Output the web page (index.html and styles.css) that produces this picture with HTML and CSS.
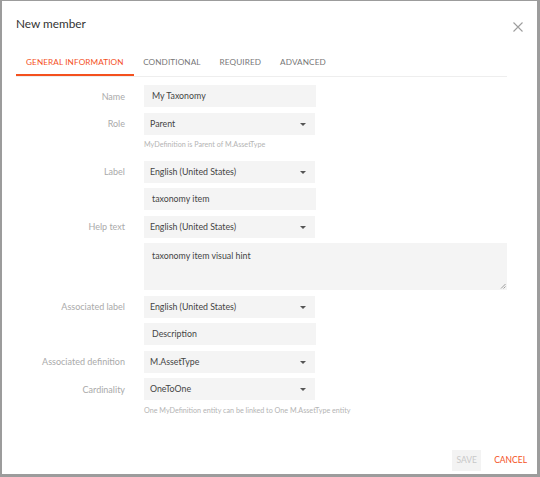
FILE: index.html
```html
<!DOCTYPE html>
<html>
<head>
<meta charset="utf-8">
<link rel="stylesheet" href="styles.css">
</head>
<body>
<div class="dialog">
  <div class="header">
    <div class="title">New member</div>
    <svg class="close" width="10" height="10" viewBox="0 0 10 10"><path d="M0.5 0.5L9.5 9.5M9.5 0.5L0.5 9.5" stroke="#9e9e9e" stroke-width="1.1" fill="none"/></svg>
  </div>
  <div class="tabs">
    <div class="tab active">GENERAL INFORMATION</div>
    <div class="tab">CONDITIONAL</div>
    <div class="tab">REQUIRED</div>
    <div class="tab">ADVANCED</div>
  </div>
  <div class="form">
    <div class="label">Name</div>
    <div class="input">My Taxonomy</div>

    <div class="label">Role</div>
    <div class="select">Parent<span class="caret"></span></div>
    <div class="hint">MyDefinition is Parent of M.AssetType</div>

    <div class="label">Label</div>
    <div class="select">English (United States)<span class="caret"></span></div>
    <div class="input">taxonomy item</div>

    <div class="label">Help text</div>
    <div class="select">English (United States)<span class="caret"></span></div>
    <div class="textarea">taxonomy item visual hint
      <svg class="grip" width="6" height="6" viewBox="0 0 6 6"><path d="M5.5 1L1 5.5M5.5 3.5L3.5 5.5" stroke="#888" stroke-width="0.8" fill="none"/></svg>
    </div>

    <div class="label">Associated label</div>
    <div class="select">English (United States)<span class="caret"></span></div>
    <div class="input">Description</div>

    <div class="label">Associated definition</div>
    <div class="select">M.AssetType<span class="caret"></span></div>

    <div class="label">Cardinality</div>
    <div class="select">OneToOne<span class="caret"></span></div>
    <div class="hint">One MyDefinition entity can be linked to One M.AssetType entity</div>
  </div>
  <div class="footer">
    <div class="btn save">SAVE</div>
    <div class="btn cancel">CANCEL</div>
  </div>
</div>
</body>
</html>
```
FILE: styles.css
```css
* { box-sizing: border-box; }
html, body { margin: 0; padding: 0; background: #fff; }
body { font-family: Lato, "Open Sans", sans-serif; color: #444; }

.dialog {
  width: 540px;
  height: 477px;
  border-style: solid;
  border-color: #9c9c9c;
  border-width: 1px 3px 3px 2px;
  display: flex;
  flex-direction: column;
  background: #fff;
}

.header {
  display: flex;
  justify-content: space-between;
  align-items: flex-start;
  padding: 16px 14px 0 14px;
  height: 49px;
}
.title { font-size: 11.8px; color: #333; line-height: 14px; }
.close { margin-top: 5px; }

.tabs {
  display: flex;
  margin: 0 30px 0 14px;
  border-bottom: 1px solid #eeeeee;
  height: 27px;
}
.tab {
  font-size: 8.2px;
  color: #777;
  padding: 0 9.5px;
  line-height: 25px;
  letter-spacing: 0.1px;
}
.tab.active {
  color: #f4511e;
  border-bottom: 2px solid #f4511e;
  padding: 0 10px;
}

.form {
  display: grid;
  grid-template-columns: 123px 172px;
  column-gap: 19px;
  row-gap: 5.5px;
  padding-top: 8px;
  align-items: center;
  flex: 1;
  align-content: start;
}
.label {
  grid-column: 1;
  text-align: right;
  font-size: 9px;
  color: #aaa;
}
.input, .select, .textarea, .hint { grid-column: 2; }
.input, .select {
  height: 22px;
  background: #f4f4f4;
  font-size: 8.8px;
  color: #444;
  line-height: 22px;
  padding: 0 8px;
  position: relative;
}
.select { padding-left: 6px; width: 171px; }
.caret {
  position: absolute;
  right: 9px;
  top: 10px;
  width: 0; height: 0;
  border-left: 3px solid transparent;
  border-right: 3px solid transparent;
  border-top: 3px solid #555;
}
.textarea {
  width: 363px;
  height: 47px;
  background: #f4f4f4;
  font-size: 8.8px;
  padding: 6px 8px;
  position: relative;
  line-height: 14px;
}
.grip { position: absolute; right: 1px; bottom: 1px; }
.hint {
  font-size: 7.2px;
  color: #b4b4b4;
  line-height: 10px;
  margin: 0 0 5px;
  white-space: nowrap;
}

.footer {
  display: flex;
  justify-content: flex-end;
  align-items: center;
  padding: 0 10px 3px 0;
  gap: 13px;
}
.btn { font-size: 8.5px; height: 21px; line-height: 21px; }
.save { background: #f3f3f3; color: #c8c8c8; width: 29px; text-align: center; }
.cancel { color: #f4511e; }
```
